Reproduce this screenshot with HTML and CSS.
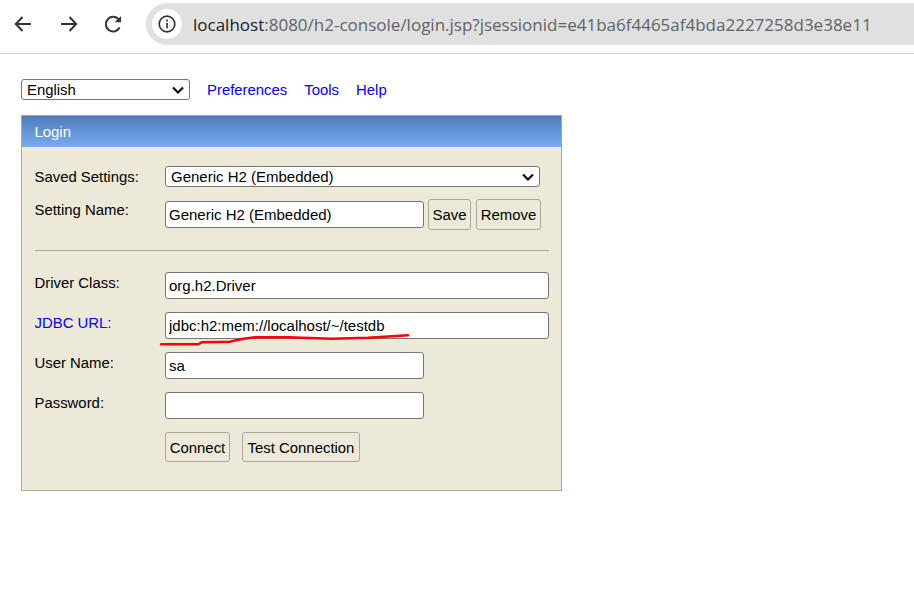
FILE: index.html
```html
<!DOCTYPE html>
<html lang="en">
<head>
<meta charset="utf-8">
<title>H2 Console</title>
<link rel="stylesheet" href="styles.css">
</head>
<body>
<header class="toolbar">
  <div class="nav-icons">
    <svg class="nav-icon" viewBox="0 0 24 24"><path d="M20 12H5M11.5 5 4.800 12l6.700 7" /></svg>
    <svg class="nav-icon fwd" viewBox="0 0 24 24"><path d="M4 12h15M12.500 5l6.700 7-6.700 7" /></svg>
    <svg class="nav-icon" viewBox="0 0 24 24"><path d="M18.600 15.500A7.300 7.300 0 1 1 17.300 7L19 8.800" /><path class="solid" d="M20 4v6.300h-6.300z" /></svg>
  </div>
  <div class="omnibox">
    <span class="site-info">
      <svg class="info-icon" viewBox="0 0 20 20"><circle cx="10" cy="10" r="7.800" /><path d="M10 9v5.300M10 5.600v1.800" /></svg>
    </span>
    <span class="url"><span class="host">localhost</span>:8080/h2-console/login.jsp?jsessionid=e41ba6f4465af4bda2227258d3e38e11</span>
  </div>
</header>
<main class="page">
  <nav class="top-row">
    <select class="lang"><option>English</option></select>
    <a href="#">Preferences</a>
    <a href="#">Tools</a>
    <a href="#">Help</a>
  </nav>
  <section class="panel">
    <h1 class="panel-title">Login</h1>
    <form class="panel-body">
      <div class="row row-saved">
        <label>Saved Settings:</label>
        <select class="saved"><option>Generic H2 (Embedded)</option></select>
      </div>
      <div class="row row-name">
        <label>Setting Name:</label>
        <input class="short name-input" type="text" value="Generic H2 (Embedded)">
        <button type="button" class="btn-save">Save</button>
        <button type="button" class="btn-remove">Remove</button>
      </div>
      <hr>
      <div class="row field">
        <label><span>Driver Class:</span></label>
        <input class="long" type="text" value="org.h2.Driver">
      </div>
      <div class="row field">
        <label><a href="#">JDBC URL:</a></label>
        <input class="long" type="text" value="jdbc:h2:mem://localhost/~/testdb">
      </div>
      <div class="row field">
        <label>User Name:</label>
        <input class="short" type="text" value="sa">
      </div>
      <div class="row field">
        <label>Password:</label>
        <input class="short" type="password">
      </div>
      <div class="row row-actions">
        <button type="button" class="btn-connect">Connect</button>
        <button type="button" class="btn-test">Test Connection</button>
      </div>
    </form>
    <svg class="scribble" viewBox="0 0 250 16"><path d="M1 13.300 38.300 13.300 41.700 11.300 70 10.700 81.700 8 95 6.300 128 6.300 171.700 7.700 208 6.700 248 4.300" /></svg>
  </section>
</main>
</body>
</html>
```
FILE: styles.css
```css
* { box-sizing: border-box; }
html, body { margin: 0; padding: 0; background: #fff; }
body { font-family: "Liberation Sans", Arial, sans-serif; font-size: 14.9px; color: #000; width: 914px; height: 594px; overflow: hidden; }

.toolbar { height: 54px; border-bottom: 1px solid #d0d0d0; display: flex; padding-top: 3px; overflow: hidden; }
.nav-icons { display: flex; gap: 20px; padding: 9px 0 0 11px; width: 146px; }
.nav-icon { width: 24px; height: 24px; fill: none; stroke: #333; stroke-width: 2; }
.nav-icon.fwd { margin-left: 2px; }
.nav-icon .solid { fill: #333; stroke: none; }
.omnibox { flex: 1; height: 42px; margin-right: -30px; background: #e0e0e0; border-radius: 21px; display: flex; align-items: center; padding-left: 6px; }
.site-info { width: 30px; height: 30px; border-radius: 50%; background: #fff; display: flex; align-items: center; justify-content: center; flex: none; }
.info-icon { width: 20px; height: 20px; fill: none; stroke: #333; stroke-width: 1.700; }
.url { margin-left: 11px; font-family: "Open Sans", "Noto Sans", sans-serif; font-size: 17px; color: #5f6368; white-space: nowrap; }
.host { color: #202124; }

.page { padding: 25px 0 0 21px; }
.top-row { display: flex; align-items: center; height: 21px; gap: 17px; }
a { color: #0000ff; text-decoration: none; }
select, input, button { font: inherit; color: #000; margin: 0; }
select {
  appearance: none;
  height: 21px;
  line-height: normal;
  padding: 0 0 0 5px;
  border: 1px solid #767676;
  border-radius: 3px;
  background-color: #fff;
  background-image: url("data:image/svg+xml,%3Csvg xmlns='http://www.w3.org/2000/svg' width='12' height='8'%3E%3Cpath d='M1 1.500l5 5 5-5' fill='none' stroke='%23111' stroke-width='2.200'/%3E%3C/svg%3E");
  background-repeat: no-repeat;
  background-position: right 5px center;
}
.lang { width: 169px; }
.saved { width: 375px; font-size: 15px; }

.panel { position: relative; width: 541px; height: 376px; margin-top: 15px; border: 1px solid #aca899; background: #ece9d8; }
.panel-title { margin: 0; height: 31px; padding: 0 12.5px; display: flex; align-items: center; font-size: inherit; font-weight: normal; color: #fff; background: linear-gradient(#517cba, #74adf1); }
.panel-body { padding: 19px 12px 0 12.5px; }
.row { display: flex; }
.row label { width: 130.5px; flex: none; }
.row-saved { height: 21px; line-height: 22px; }
.row-name { height: 31px; margin-top: 12px; align-items: center; }
.row-name label { align-self: flex-start; line-height: 22px; }
.name-input { margin-right: 4px; }
.btn-remove { margin-left: 5px; }
hr { margin: 20px 0 21px 0.5px; height: 1px; border: 0; background: #aca899; }
.field { height: 27px; margin-bottom: 13px; }
.field label { line-height: 23px; }
input { height: 27px; font-size: 15px; background: #fff; border: 1px solid #767676; border-radius: 3px; padding: 0 3px; }
.short { width: 259px; }
.long { width: 384.500px; }
button { height: 31px; padding: 0; background: #ece9d8; border: 1px solid #aca899; border-radius: 3px; }
.btn-save { width: 43px; }
.btn-remove { width: 65px; }
.row-actions { height: 30px; padding-left: 130.5px; gap: 12px; }
.row-actions button { height: 30px; padding-top: 1px; }
.btn-connect { width: 65px; }
.btn-test { width: 118px; }
.scribble { position: absolute; left: 138px; top: 215px; width: 250px; height: 16px; overflow: visible; fill: none; stroke: #f00; stroke-width: 2.400; stroke-linecap: round; stroke-linejoin: round; }
```
